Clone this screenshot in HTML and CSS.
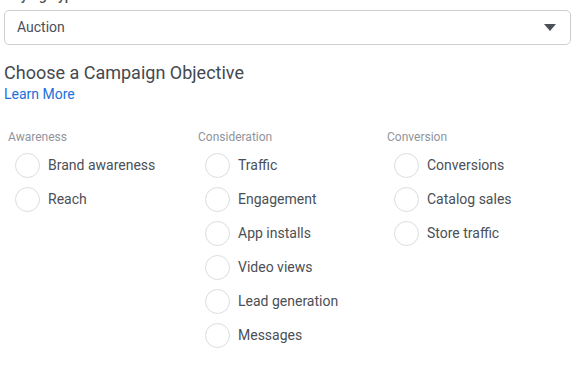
FILE: index.html
```html
<!DOCTYPE html>
<html lang="en">
<head>
    <meta charset="UTF-8" />
    <title>Campaign Objective</title>
    <link rel="stylesheet" href="styles.css">
</head>
<body>
    <div class="page">
        <div class="field-label">Buying Type</div>
        <div class="select">
            <span>Auction</span>
            <svg class="caret" width="12" height="7" viewBox="0 0 12 7"><path d="M0 0h12L6 7z" fill="#4b4f56"/></svg>
        </div>

        <h2 class="title">Choose a Campaign Objective</h2>
        <a class="learn" href="#">Learn More</a>

        <div class="objectives">
            <div class="group">
                <div class="group-name">Awareness</div>
                <label class="option"><span class="radio"></span>Brand awareness</label>
                <label class="option"><span class="radio"></span>Reach</label>
            </div>
            <div class="group">
                <div class="group-name">Consideration</div>
                <label class="option"><span class="radio"></span>Traffic</label>
                <label class="option"><span class="radio"></span>Engagement</label>
                <label class="option"><span class="radio"></span>App installs</label>
                <label class="option"><span class="radio"></span>Video views</label>
                <label class="option"><span class="radio"></span>Lead generation</label>
                <label class="option"><span class="radio"></span>Messages</label>
            </div>
            <div class="group">
                <div class="group-name">Conversion</div>
                <label class="option"><span class="radio"></span>Conversions</label>
                <label class="option"><span class="radio"></span>Catalog sales</label>
                <label class="option"><span class="radio"></span>Store traffic</label>
            </div>
        </div>
    </div>
</body>
</html>
```
FILE: styles.css
```css
* {
    margin: 0;
    padding: 0;
    box-sizing: border-box;
    font-family: Roboto, 'Liberation Sans', sans-serif;
}

body {
    background: #ffffff;
    overflow: hidden;
}

.page {
    padding: 0 5px 0 4px;
}

.field-label {
    font-size: 14px;
    font-weight: 500;
    line-height: 16px;
    color: #4b4f56;
    margin-top: -13px;
    margin-bottom: 7px;
}

.select {
    height: 35px;
    border: 1px solid #ccd0d5;
    border-radius: 5px;
    display: flex;
    align-items: center;
    justify-content: space-between;
    padding: 0 14px 1px 12px;
    font-size: 14px;
    color: #4b4f56;
}

.caret {
    display: block;
}

.title {
    margin-top: 17px;
    font-size: 18px;
    font-weight: 400;
    line-height: 22px;
    color: #444950;
}

.learn {
    display: block;
    margin-top: 2px;
    font-size: 14px;
    line-height: 17px;
    color: #216fdb;
    text-decoration: none;
}

.objectives {
    display: grid;
    grid-template-columns: 190px 189px 190px;
    margin: 27px 0 0 4px;
}

.group-name {
    font-size: 12px;
    line-height: 14px;
    color: #90949c;
    margin-bottom: 4px;
}

.option {
    display: flex;
    align-items: center;
    gap: 8px;
    height: 34px;
    padding-left: 7px;
    font-size: 14px;
    color: #4b4f56;
}

.radio {
    width: 25px;
    height: 25px;
    border: 1px solid #dadde1;
    border-radius: 50%;
    flex-shrink: 0;
}
```
